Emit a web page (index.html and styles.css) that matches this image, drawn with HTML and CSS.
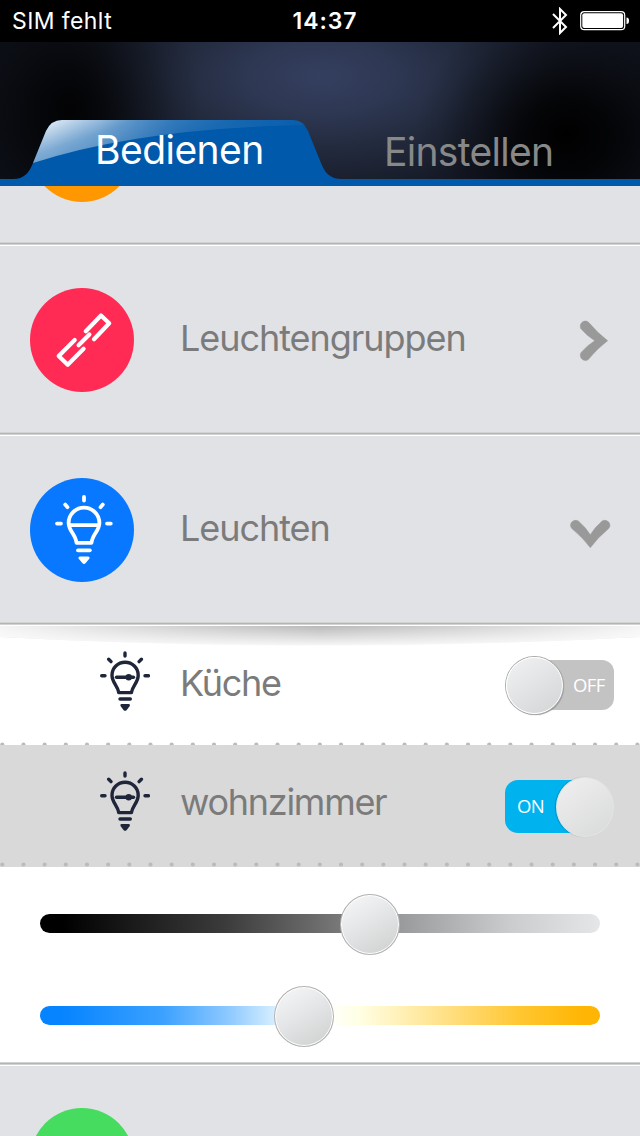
FILE: index.html
```html
<!DOCTYPE html>
<html lang="de">
<head>
<meta charset="utf-8">
<title>Leuchten</title>
<link rel="stylesheet" href="styles.css">
</head>
<body>
<svg class="defs" width="0" height="0" aria-hidden="true">
  <symbol id="bulb-small" viewBox="0 0 50 64">
    <g fill="none" stroke="currentColor" stroke-width="3.400" stroke-linecap="round" stroke-linejoin="round">
      <path d="M25 3V6M1.700 25.800H5M45 25.800H48.400M8.700 9.300L11 11.600M41.400 9.300L39.100 11.600"/>
      <path d="M18.800 42.600C17.600 35.500 12 32.500 12 25.200A13.100 12.900 0 0 1 38.200 25.200C38.200 32.500 32.600 35.500 31.400 42.600Z"/>
      <path d="M16.500 27.300H33.500"/><path d="M20 49H30.300"/>
    </g>
    <circle cx="28.700" cy="27.300" r="3.200" fill="currentColor"/>
    <path d="M21.500 54H28.800Q30.500 54.200 29.800 56L26.500 60.300Q25.100 61.300 23.700 60.300L20.500 56Q19.900 54.200 21.500 54Z" fill="currentColor"/>
  </symbol>
  <symbol id="chevron" viewBox="0 0 44 44">
    <path d="M15.900 10.800C13.200 5 20.300.2 24.300 5.100Q32 14.600 42.700 22.700Q32 30.800 24.300 40.400C20.300 45.300 13.200 40.600 15.900 34.700Q22 27.500 29.700 22.700Q22 18 15.900 10.800Z" fill="#999" stroke="#999" stroke-width=".5"/>
  </symbol>
</svg>
<div class="screen">
  <div class="status">
    <span class="carrier">SIM fehlt</span>
    <span class="clock">14:37</span>
    <span class="indicators">
      <svg width="18" height="28" viewBox="0 0 18 28"><path d="M2 7L15 20L9 26V2L15 8L2 21" fill="none" stroke="#fff" stroke-width="2"/></svg>
      <svg width="49" height="20" viewBox="0 0 49 20"><rect x=".7" y=".7" width="44" height="18" rx="3.500" fill="none" stroke="#fff" stroke-width="1.200"/><rect x="2.300" y="2.300" width="40.800" height="14.800" rx="2" fill="#fff"/><path d="M46.500 6.500Q49 6.500 49 9.800T46.500 13Z" fill="#fff"/></svg>
    </span>
  </div>
  <header class="header">
    <svg class="tab-shape" width="640" height="144" viewBox="0 0 640 144">
      <defs>
        <linearGradient id="gloss" gradientUnits="userSpaceOnUse" x1="62" y1="70" x2="96" y2="170">
          <stop offset="0" stop-color="#fff" stop-opacity=".95"/>
          <stop offset=".3" stop-color="#fff" stop-opacity=".5"/>
          <stop offset=".6" stop-color="#fff" stop-opacity=".28"/>
        </linearGradient>
        <linearGradient id="fade" gradientUnits="userSpaceOnUse" x1="50" y1="0" x2="300" y2="0">
          <stop offset="0" stop-color="#fff"/>
          <stop offset=".2" stop-color="#e0e0e0"/>
          <stop offset=".5" stop-color="#777"/>
          <stop offset="1" stop-color="#222"/>
        </linearGradient>
        <mask id="fade-mask"><rect width="640" height="144" fill="url(#fade)"/></mask>
      </defs>
      <path d="M0 137H13C24 137 29 131 33 121L46 89Q51 78 62 78H293Q303 78 308 89L321 121C325 131 330 137 342 137H640V144H0Z" fill="#0059aa"/>
      <path d="M33 121L46 89Q51 78 62 78H293Q301 78 305 83Q140 86 33 121Z" fill="url(#gloss)" mask="url(#fade-mask)"/>
    </svg>
    <span class="tab tab-on">Bedienen</span>
    <span class="tab tab-off">Einstellen</span>
  </header>
  <main>
    <section class="row row-first"><span class="disc orange"></span></section>
    <section class="row">
      <span class="disc red"><svg width="104" height="104" viewBox="0 0 104 104"><g fill="none" stroke="#fff" stroke-width="4.200" stroke-linecap="round" stroke-linejoin="round"><path d="M55.800 43.300L71 27.500L79.200 35.300L64 51.300M44.700 52L28.700 68L37.700 76.800L53.600 60.800M48.600 57.200L59.400 46.500"/></g></svg></span>
      <span class="label groups">Leuchtengruppen</span>
      <svg class="arrow" width="44" height="44"><use href="#chevron"/></svg>
    </section>
    <section class="row">
      <span class="disc blue"><svg width="104" height="104" viewBox="0 0 104 104"><g fill="none" stroke="#fff" stroke-width="3.800" stroke-linecap="round" stroke-linejoin="round"><path d="M54 18.800V22.500M27 45.600H31M77 45.600H80.800M35.200 26.600L37.500 29.200M72.800 26.600L70.500 29.200"/><path d="M46.500 64.800C45.500 56 38.600 53 38.600 45A15.400 15.400 0 0 1 69.400 45C69.400 53 62.500 56 61.500 64.800ZM39 47.200H69"/><path d="M48 72.300H59.800"/></g><path d="M50 78.500H58Q60.200 78.800 59.300 80.800L55.500 85.300Q54 86.500 52.500 85.300L48.700 80.800Q47.800 78.800 50 78.500Z" fill="#fff"/></svg></span>
      <span class="label lights">Leuchten</span>
      <svg class="arrow arrow-down" width="44" height="44"><use href="#chevron"/></svg>
    </section>
    <section class="item item-off">
      <svg class="shade" width="640" height="22" viewBox="0 0 640 22" preserveAspectRatio="none"><defs><linearGradient id="shade-y" x1="0" y1="0" x2="0" y2="1"><stop offset="0" stop-color="#b9b9b9"/><stop offset=".5" stop-color="#d8d8d8"/><stop offset="1" stop-color="#f7f7f7"/></linearGradient><linearGradient id="shade-x"><stop offset="0" stop-color="#fff" stop-opacity=".85"/><stop offset=".25" stop-color="#fff" stop-opacity=".4"/><stop offset=".5" stop-color="#fff" stop-opacity="0"/><stop offset=".75" stop-color="#fff" stop-opacity=".4"/><stop offset="1" stop-color="#fff" stop-opacity=".85"/></linearGradient></defs><path d="M0 0H640V11Q320 28 0 11Z" fill="url(#shade-y)"/><path d="M0 0H640V11Q320 28 0 11Z" fill="url(#shade-x)"/></svg>
      <svg class="bulb" width="50" height="64"><use href="#bulb-small"/></svg>
      <span class="label kitchen">Küche</span>
      <span class="switch"><span class="off-text">OFF</span><span class="knob knob-left"></span></span>
      <svg class="dots" width="640" height="5"><line x1="2.300" y1="2.500" x2="640" y2="2.500" stroke="#bbb" stroke-width="4.200" stroke-linecap="round" stroke-dasharray="0 21.170"/></svg>
    </section>
    <section class="item item-on">
      <svg class="bulb" width="50" height="64"><use href="#bulb-small"/></svg>
      <span class="label living">wohnzimmer</span>
      <span class="switch switch-on"><span class="on-text">ON</span><span class="knob knob-right"></span></span>
      <svg class="dots" width="640" height="5"><line x1="2.300" y1="2.500" x2="640" y2="2.500" stroke="#bbb" stroke-width="4.200" stroke-linecap="round" stroke-dasharray="0 21.170"/></svg>
    </section>
    <section class="sliders">
      <div class="track brightness"><span class="thumb" style="left:300px"></span></div>
      <div class="track warmth"><span class="thumb" style="left:234px"></span></div>
    </section>
    <section class="row row-last"><span class="disc green"></span></section>
  </main>
</div>
</body>
</html>
```

FILE: styles.css
```css
* { box-sizing: border-box; }
body { margin: 0; font-family: Inter, "Liberation Sans", sans-serif; }
svg { display: block; }
.defs { position: absolute; }
.screen { width: 640px; height: 1136px; overflow: hidden; background: #fff; }

.status { height: 42px; background: #000; color: #fff; display: grid; grid-template-columns: 200px 240px 200px; align-items: center; font-size: 23px; line-height: 42px; }
.carrier { padding-left: 12px; letter-spacing: .4px; }
.clock { text-align: center; font-weight: 600; letter-spacing: .9px; padding-left: 10px; }
.indicators { display: flex; justify-content: flex-end; align-items: center; gap: 11px; padding-right: 11px; }

.header { position: relative; height: 144px; display: grid; grid-template-columns: 384px 1fr; white-space: nowrap;
  background:
    radial-gradient(ellipse 130px 160px at 70px 66px, rgba(0,0,0,.9), rgba(0,0,0,.7) 25%, rgba(0,0,0,.36) 55%, rgba(0,0,0,.1) 82%, transparent),
    radial-gradient(ellipse 150px 130px at 566px 92px, #000, rgba(0,0,0,.8) 28%, rgba(0,0,0,.4) 58%, rgba(0,0,0,.1) 84%, transparent),
    radial-gradient(ellipse 330px 160px at 322px 35px, #343f60, #2e3853 22%, #222a3d 45%, #171b28 72%, #10131d); }
.tab-shape { position: absolute; left: 0; top: 0; }
.tab { position: relative; font-size: 39px; line-height: 48px; font-weight: 400; }
.tab-on { padding: 84px 0 0 95px; color: #fff; letter-spacing: -.55px; }
.tab-off { padding-top: 86px; color: #888; letter-spacing: -.7px; }

.row { height: 190px; display: flex; padding: 42px 0 0 30px; overflow: hidden; background: linear-gradient(#d1d2d2 0 1px, #b4b4b4 1px 2px, #d1d2d2 2px 3px, #fff 3px) 0 100% / 100% 4px no-repeat #e1e2e6; }
.row-first { height: 60px; padding-top: 0; align-items: flex-start; }
.row-last { height: 70px; padding-top: 42px; background: #e1e2e6; }
.disc { width: 104px; height: 104px; border-radius: 50%; flex: none; }
.orange { background: #ff9800; margin-top: -88.5px; }
.red { background: #ff2b54; }
.blue { background: #0778ff; }
.green { background: #46dc5f; }
.label { color: #7b7b7b; font-size: 36px; line-height: 44px; white-space: nowrap; letter-spacing: -1.05px; }
.kitchen { letter-spacing: -1.3px; }
.living { letter-spacing: -1.28px; }
.row .label { margin: 28px 0 0 46px; width: 380px; }
.arrow { flex: none; margin: 30px 0 0 5px; }
.arrow-down { transform: rotate(90deg); margin: 26.6px 0 0 8.5px; }

.item { position: relative; display: grid; grid-template-columns: 50px 324px 1fr; column-gap: 30px; padding-left: 100px; align-content: start; }
.item-off { height: 119px; padding-top: 24px; background: #fff; overflow: hidden; }
.item-on { height: 122px; padding-top: 25px; background: #d9d9d9; }
.item .label { margin-top: 11px; width: 324px; }
.item-on .label { margin-top: 10px; }
.bulb { color: #1f2639; }
.shade { position: absolute; left: 0; top: 0; }
.dots { position: absolute; left: 0; bottom: -2px; }
.item-on .dots { bottom: 0; }
.switch { position: relative; width: 84px; height: 50px; border-radius: 0 12px 12px 0; background: #c3c3c3; margin: 10px 0 0 -4px; justify-self: start; color: #fff; font-size: 18.5px; line-height: 50px; letter-spacing: -.6px; font-family: "Open Sans", sans-serif; }
.off-text { display: block; padding-left: 43px; }
.on-text { display: block; padding-left: 12px; }
.switch-on { width: 90px; height: 53px; background: #00b2ee; line-height: 51px; margin-left: -29px; border-radius: 13px; }
.knob { position: absolute; width: 57px; height: 57px; border-radius: 50%; border: 1.5px solid #fff; background: linear-gradient(145deg, #f1f2f3, #d2d4d5); box-shadow: 0 0 0 1px #aaa, 1px 1px 1px #888; }
.knob-left { left: -24px; top: -3px; }
.knob-right { width: 58px; height: 60px; left: 51px; top: -3.5px; border: 1px solid #e3e3e3; box-shadow: -1px 0 1px rgba(0,0,0,.2); background: linear-gradient(145deg, #f0f0f0, #d8d9d9); }

.sliders { height: 199px; padding: 47px 40px 0; display: flex; flex-direction: column; gap: 73px; background: linear-gradient(#d1d2d2 0 1px, #b4b4b4 1px 2px, #d1d2d2 2px 3px, #fff 3px) 0 100% / 100% 4px no-repeat #fff; }
.track { position: relative; height: 19px; border-radius: 10px; }
.brightness { background: linear-gradient(90deg, #000 4%, #1b1b1b 17%, #3b3b3b 33%, #6a6a6a 49%, #98999a 64%, #cbcccd 84%, #e5e6e8); }
.warmth { background: linear-gradient(90deg, #0684ff 4%, #3ca1ff 22%, #90caff 34%, #dff3ff 43%, #fff 51%, #ffffe4 57%, #ffe188 72%, #ffc62f 86%, #ffb503 97%); }
.thumb { position: absolute; top: -20px; width: 60px; height: 61px; border-radius: 50%; border: 1px solid #b2b2b2; background: linear-gradient(150deg, #f4f5f6 8%, #e5e6e7 45%, #cfd1d1 95%); box-shadow: inset 0 0 0 1px #fff; }
```
